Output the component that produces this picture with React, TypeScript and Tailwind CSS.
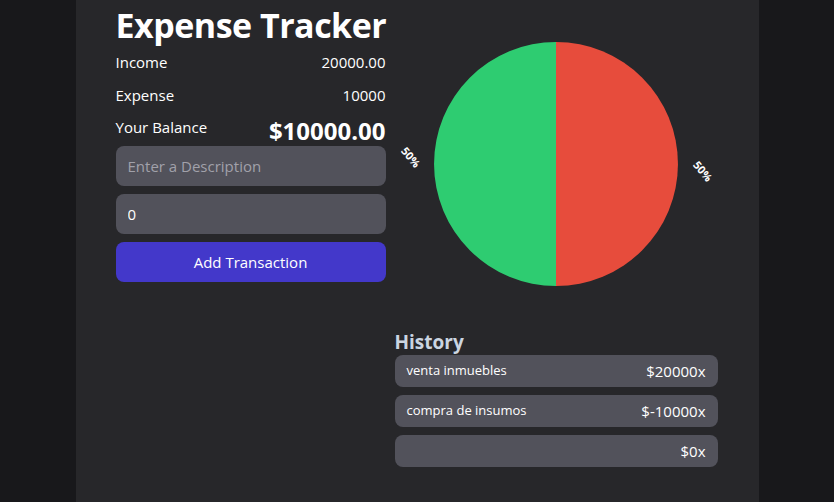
import React from "react";

const font = { fontFamily: '"Open Sans", "Noto Sans", sans-serif' };

function Pie() {
  const cx = 161, cy = 122, r = 122;
  return (
    <svg width="323" height="290" viewBox="0 0 323 290" className="block">
      <path d={`M ${cx} ${cy} L ${cx} ${cy - r} A ${r} ${r} 0 0 1 ${cx} ${cy + r} Z`} fill="#e74c3c" />
      <path d={`M ${cx} ${cy} L ${cx} ${cy + r} A ${r} ${r} 0 0 1 ${cx} ${cy - r} Z`} fill="#2ecc71" />
      <text x={15} y={116} fill="#ffffff" fontSize="11" fontWeight="700" fontFamily='"Open Sans", sans-serif' textAnchor="middle" dominantBaseline="middle" transform="rotate(50 15 116)">50%</text>
      <text x={307} y={130} fill="#ffffff" fontSize="11" fontWeight="700" fontFamily='"Open Sans", sans-serif' textAnchor="middle" dominantBaseline="middle" transform="rotate(50 307 130)">50%</text>
    </svg>
  );
}

const history = [
  { d: "venta inmuebles", a: "$20000x" },
  { d: "compra de insumos", a: "$-10000x" },
  { d: "", a: "$0x" },
];

export default function App() {
  return (
    <div className="w-[834px] h-[502px] bg-[#18181b] flex justify-center overflow-hidden" style={font}>
      <div className="w-[683px] h-full bg-[#27272a] px-10 flex gap-[9px] text-white">
        <div className="w-[270px] flex flex-col">
          <h1 className="text-[34px] leading-[40px] tracking-[-0.5px] font-bold mt-[5px] mb-[5px] whitespace-nowrap">Expense Tracker</h1>
          <div className="flex justify-between h-[33px] text-[15px] leading-[24px]">
            <span>Income</span>
            <span>20000.00</span>
          </div>
          <div className="flex justify-between h-[32px] text-[15px] leading-[24px]">
            <span>Expense</span>
            <span>10000</span>
          </div>
          <div className="flex justify-between items-start h-[31px]">
            <span className="text-[15px] leading-[24px]">Your Balance</span>
            <span className="text-[24px] leading-[32px] font-bold">$10000.00</span>
          </div>
          <div className="flex flex-col gap-[8px]">
            <input
              className="h-[40px] rounded-lg bg-[#52525b] px-3 text-[15px] outline-none placeholder:text-[#a1a1aa] text-white"
              placeholder="Enter a Description"
              style={font}
            />
            <input
              className="h-[40px] rounded-lg bg-[#52525b] px-3 text-[15px] outline-none text-white"
              defaultValue="0"
              style={font}
            />
            <button className="h-[40px] rounded-lg bg-[#4338ca] text-[15px] text-white" style={font}>
              Add Transaction
            </button>
          </div>
        </div>
        <div className="w-[323px] flex flex-col">
          <div className="mt-[42px]">
            <Pie />
          </div>
          <h2 className="text-[19px] leading-[24px] font-bold text-[#cbd5e1] -mt-[2px] mb-[1px]">History</h2>
          <div className="flex flex-col gap-[8px]">
            {history.map((h, i) => (
              <div key={i} className="h-[32px] rounded-lg bg-[#52525b] flex items-center justify-between px-3">
                <span className="text-[13px]">{h.d}</span>
                <span className="text-[15px]">{h.a}</span>
              </div>
            ))}
          </div>
        </div>
      </div>
    </div>
  );
}
